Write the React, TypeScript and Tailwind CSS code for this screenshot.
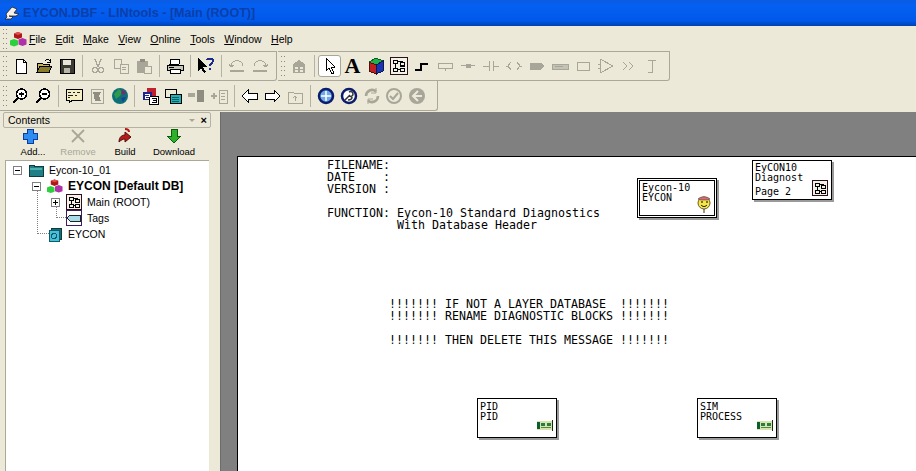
import type { ReactNode } from "react";

const G = ({ children }: { children: ReactNode }) => (
  <svg width="18" height="18" viewBox="0 0 18 18" fill="none" shapeRendering="crispEdges">
    {children}
  </svg>
);

const grey = "#a8a698";

const NewDoc = () => (
  <G>
    <path d="M4 2h7l3 3v11H4z" fill="#fff" stroke="#000" />
    <path d="M11 2v3h3" stroke="#000" />
  </G>
);
const OpenFile = () => (
  <G>
    <path d="M2 6h5l1 1h6v8H2z" fill="#c9b45c" stroke="#000" />
    <path d="M2 15l3-6h12l-3 6z" fill="#8a7a2c" stroke="#000" />
    <path d="M10 4c2-2 4-2 5 0M15 2v3h-3" stroke="#000" />
  </G>
);
const Save = () => (
  <G>
    <path d="M2 2h14v14H2z" fill="#3c3c34" stroke="#000" />
    <path d="M5 3h8v5H5z" fill="#e8e6d8" />
    <path d="M6 11h6v5H6z" fill="#b8b6a8" />
  </G>
);
const Cut = () => (
  <G>
    <path d="M6 2l3 8M12 2l-3 8" stroke={grey} strokeWidth="1.5" />
    <circle cx="6" cy="13" r="2.5" stroke={grey} strokeWidth="1.5" />
    <circle cx="12" cy="13" r="2.5" stroke={grey} strokeWidth="1.5" />
  </G>
);
const Copy = () => (
  <G>
    <path d="M2 2h7v9H2z" stroke={grey} />
    <path d="M8 7h8v9H8z" fill="#ece9d8" stroke={grey} />
    <path d="M10 10h4M10 12h4" stroke={grey} />
  </G>
);
const Paste = () => (
  <G>
    <path d="M2 4h11v12H2z" fill={grey} />
    <path d="M5 2h5v3H5z" fill="#8f8d80" />
    <path d="M9 9h7v7H9z" fill="#ece9d8" stroke={grey} />
  </G>
);
const Printer = () => (
  <G>
    <path d="M5 2h9l-1 5H4z" fill="#fff" stroke="#000" />
    <path d="M1 8h16v5H1z" fill="#c8c6b8" stroke="#000" />
    <path d="M4 12h10v4H4z" fill="#fff" stroke="#000" />
    <path d="M3 10h5" stroke="#000" />
  </G>
);
const HelpArrow = () => (
  <G>
    <path d="M1 1v13l3-3 3 5 2-1-3-5h4z" fill="#000" />
    <path d="M10 3c1-2 6-2 6 1 0 2-3 2-3 5M13 11v2" stroke="#1c2a8c" strokeWidth="2" />
  </G>
);
const Undo = () => (
  <G>
    <path d="M3 9c1-7 11-7 12 0" stroke={grey} />
    <path d="M1 7l2 3 3-2" stroke={grey} />
    <path d="M2 14h14" stroke={grey} strokeWidth="1.5" />
  </G>
);
const Redo = () => (
  <G>
    <path d="M3 9c1-7 11-7 12 0" stroke={grey} />
    <path d="M12 8l3 2 2-3" stroke={grey} />
    <path d="M2 14h14" stroke={grey} strokeWidth="1.5" />
  </G>
);
const Compile = () => (
  <G>
    <path d="M3 7l6-4 6 4v9H3z" fill={grey} />
    <path d="M5 10h3v2H5zM10 10h3v2h-3zM5 13h3v2H5zM10 13h3v2h-3z" fill="#ece9d8" />
  </G>
);
const Pointer = () => (
  <G>
    <path d="M5 1v13l3-3 3 6 2-1-3-6h4z" fill="#fff" stroke="#000" strokeLinejoin="round" />
  </G>
);
const Cube = () => (
  <G>
    <path d="M9 1l7 3-7 4-7-3z" fill="#21b14b" stroke="#0c5c24" />
    <path d="M2 5l7 3v9l-7-3z" fill="#c02020" stroke="#501010" />
    <path d="M16 4v10l-7 3V8z" fill="#1c34b4" stroke="#101850" />
  </G>
);
const Block = ({ small }: { small?: boolean }) => (
  <svg width={small ? 16 : 18} height={small ? 16 : 18} viewBox="0 0 16 16" fill="none" shapeRendering="crispEdges">
    <path d="M.5.5h15v15H.5z" fill="#f4f2e4" stroke="#2c1020" />
    <path d="M3 3h4v3H3zM9 5h4v3H9zM3 10h4v3H3zM9 10h4v3H9z" stroke="#000" />
    <path d="M5 6v4M7 4h4v1M7 11h2" stroke="#000" />
  </svg>
);
const Step = () => (
  <G>
    <path d="M2 13h6V7h7" stroke="#000" strokeWidth="2" />
  </G>
);
const Gray = ({ d, fill }: { d: string; fill?: string }) => (
  <G>
    <path d={d} stroke={grey} fill={fill ?? "none"} />
  </G>
);
const ZoomGlass = ({ plus }: { plus?: boolean }) => (
  <G>
    <circle cx="10.5" cy="7" r="5" fill="#fff" stroke="#000" strokeWidth="1.5" />
    <path d="M7 11l-5 5" stroke="#000" strokeWidth="2.5" />
    <path d="M8 7h5" stroke="#000" strokeWidth="1.5" />
    {plus && <path d="M10.5 4.5v5" stroke="#000" strokeWidth="1.5" />}
  </G>
);
const Comment = () => (
  <G>
    <path d="M1 2h16v11H8l-4 3v-3H1z" fill="#f6efc4" stroke="#000" />
    <path d="M3 5h3M8 5h2M12 5h3M3 8h5M10 8h2M3 10h2" stroke="#222" />
  </G>
);
const GreyFlag = () => (
  <G>
    <path d="M3 2h12v14H3z" stroke={grey} />
    <path d="M5 5h8l-2 4 2 5H7z" fill="#8f8d80" />
  </G>
);
const Globe = () => (
  <svg width="18" height="18" viewBox="0 0 18 18">
    <circle cx="9" cy="9" r="8" fill="#0f6f78" />
    <path d="M3 7l5-5 3 3-2 4-4 3z" fill="#2f9a4c" />
    <path d="M11 3l4 2-2 3-3-2z" fill="#7a2a70" />
    <path d="M10 11l5-1-3 5z" fill="#1c3c9c" />
  </svg>
);
const Numbers = () => (
  <G>
    <path d="M6 1h9v8H6z" fill="#c02030" />
    <path d="M2 5h9v8H2z" fill="#1c2490" />
    <path d="M8 9h9v8H8z" fill="#fff" stroke="#000" />
    <path d="M11 11h4v2h-3M15 13v2h-4" stroke="#000" />
    <path d="M4 7h4v2H4v2h4" stroke="#fff" />
  </G>
);
const Windows = () => (
  <G>
    <path d="M1 2h11v8H1z" fill="#ece9d8" stroke="#000" />
    <path d="M6 7h11v9H6z" fill="#22b0b8" stroke="#000" />
    <path d="M8 10h7M8 12h7M8 14h7" stroke="#0c5c60" />
  </G>
);
const GreyMerge = () => (
  <G>
    <path d="M1 6h7v4H1z" fill={grey} />
    <path d="M10 3h7v12h-7z" fill="#8f8d80" />
  </G>
);
const GreyPlus = () => (
  <G>
    <path d="M1 9h6M4 6v6" stroke={grey} strokeWidth="1.5" />
    <path d="M9 3h8v13H9z" stroke={grey} />
    <path d="M11 6h4M11 9h4M11 12h4" stroke={grey} />
  </G>
);
const ArrowL = () => (
  <G>
    <path d="M1 9l6-6v3h9v6H7v3z" fill="#fff" stroke="#000" />
  </G>
);
const ArrowR = () => (
  <G>
    <path d="M17 9l-6-6v3H2v6h9v3z" fill="#fff" stroke="#000" />
  </G>
);
const UpFolder = () => (
  <G>
    <path d="M2 5h5l1 1h8v10H2z" stroke={grey} />
    <path d="M9 14V9M7 11l2-2 2 2" stroke={grey} />
  </G>
);
const RoundPlus = () => (
  <svg width="18" height="18" viewBox="0 0 18 18">
    <circle cx="9" cy="9" r="7" fill="#6fa8e8" stroke="#0c1c6c" strokeWidth="2.5" />
    <path d="M9 4v10M4 9h10" stroke="#fff" strokeWidth="1.5" />
  </svg>
);
const RoundKey = () => (
  <svg width="18" height="18" viewBox="0 0 18 18" fill="none">
    <circle cx="9" cy="9" r="7" fill="#fff" stroke="#0c1c6c" strokeWidth="2.5" />
    <path d="M5 13l5-5M9 5c2-1 4 0 4 2s-2 3-4 2M8 13c2 0 4-1 4-3" stroke="#333" strokeWidth="1.5" />
  </svg>
);
const RoundSync = () => (
  <svg width="18" height="18" viewBox="0 0 18 18" fill="none">
    <path d="M3 9a6 6 0 0 1 10-4.5M15 9a6 6 0 0 1-10 4.5" stroke={grey} strokeWidth="2.5" />
    <path d="M13 1v5h-5M5 17v-5h5" stroke={grey} />
  </svg>
);
const RoundCheck = () => (
  <svg width="18" height="18" viewBox="0 0 18 18" fill="none">
    <circle cx="9" cy="9" r="7" stroke={grey} strokeWidth="2" />
    <path d="M5 9l3 3 5-6" stroke={grey} strokeWidth="2" />
  </svg>
);
const RoundBack = () => (
  <svg width="18" height="18" viewBox="0 0 18 18" fill="none">
    <circle cx="9" cy="9" r="8" fill={grey} />
    <path d="M10 4L5 9l5 5M5 9h9" stroke="#ece9d8" strokeWidth="2" />
  </svg>
);

const Grip = () => (
  <div className="w-[4px] h-[20px] ml-[3px] mr-[2px] shrink-0 grid grid-cols-2 gap-[1px] content-between">
    {Array.from({ length: 10 }).map((_, i) => (
      <span key={i} className="w-[1px] h-[1px] bg-[#8a887a]" />
    ))}
  </div>
);

const Sep = () => <div className="w-[1px] h-[22px] mx-[3.5px] bg-[#b4b2a2] shrink-0" />;

const Tool = ({ children, active }: { children: ReactNode; active?: boolean }) => (
  <div
    className={`w-[23px] h-[22px] shrink-0 flex items-center justify-center ${
      active ? "bg-white border border-[#a8a698] rounded-[3px]" : ""
    }`}
  >
    {children}
  </div>
);

// second row's buttons sit a little tighter than the first row's
const Tool2 = ({ children }: { children: ReactNode }) => (
  <div className="w-[22.8px] h-[22px] shrink-0 flex items-center justify-center">{children}</div>
);

const Band = ({ children, className }: { children: ReactNode; className: string }) => (
  <div className={`${className} h-full flex items-center border-r border-b border-[#aca899] rounded-br-[3px] shrink-0`}>
    <Grip />
    {children}
  </div>
);

const menus = [
  ["F", "ile"],
  ["E", "dit"],
  ["M", "ake"],
  ["V", "iew"],
  ["O", "nline"],
  ["T", "ools"],
  ["W", "indow"],
  ["H", "elp"],
];

const MiniApp = () => (
  <svg width="17" height="16" viewBox="0 0 17 16">
    <path d="M8 1l4 1.500v4L8 8 4 6.500v-4z" fill="#b01818" />
    <path d="M4 8l4 1.500v4.500L4 15.500 0 14V9.500z" fill="#2cd03c" />
    <path d="M12.500 7l4 1.500v5l-4 1.500-4-1.500v-5z" fill="#b030a8" />
    <path d="M8 1l4 1.500L8 4 4 2.500z" fill="#e05050" />
  </svg>
);

const Folder = () => (
  <svg width="16" height="14" viewBox="0 0 16 14" shapeRendering="crispEdges">
    <path d="M1 2h5v1h9v10H1z" fill="#1f7f86" stroke="#0c3c40" />
    <path d="M2 5h12v2H2z" fill="#4fb0b4" />
  </svg>
);

const TagIcon = () => (
  <svg width="16" height="16" viewBox="0 0 16 16" shapeRendering="crispEdges">
    <path d="M.5.5h15v15H.5z" fill="#fff" stroke="#3c1c60" />
    <path d="M1 8l3-3h10v6H4z" fill="#a8dce8" stroke="#222" />
  </svg>
);

const DbIcon = () => (
  <svg width="14" height="15" viewBox="0 0 14 15" shapeRendering="crispEdges">
    <path d="M3 1h10v11H3z" fill="#1c6c74" stroke="#0c3c40" />
    <path d="M1 3h10v11H1z" fill="#4ac0d8" stroke="#0c5c70" />
    <circle cx="6" cy="9" r="2.5" fill="none" stroke="#0c5c70" />
  </svg>
);

const Expander = ({ open }: { open?: boolean }) => (
  <div className="w-[9px] h-[9px] border border-[#808080] bg-white flex items-center justify-center relative shrink-0">
    <span className="w-[5px] h-[1px] bg-black absolute" />
    {!open && <span className="w-[1px] h-[5px] bg-black absolute" />}
  </div>
);

const TreeRow = ({
  indent,
  exp,
  icon,
  children,
  bold,
}: {
  indent: string;
  exp?: ReactNode;
  icon: ReactNode;
  children: ReactNode;
  bold?: boolean;
}) => (
  <div className={`h-[16px] flex items-center relative ${indent}`}>
    <div className="w-[9px] mr-[6px] shrink-0 flex justify-center">{exp}</div>
    <div className="w-[16px] flex justify-center shrink-0">{icon}</div>
    <span className={`ml-[5px] whitespace-nowrap ${bold ? "font-bold text-[12px]" : "text-[10.5px] pt-[1px]"}`}>{children}</span>
  </div>
);

const ChipIcon = () => (
  <svg className="absolute right-[3px] bottom-[6px]" width="16" height="11" viewBox="0 0 16 11" shapeRendering="crispEdges">
    <path d="M0 1h16v9H0z" fill="#d8e4b0" />
    <path d="M0 2h3v7H0z" fill="#0c6030" />
    <path d="M4 3h4v3H4zM10 3h4v3h-4z" fill="#2c7c40" />
    <path d="M4 7h10v1H4z" fill="#4c8c50" />
    <path d="M15 0h1v11h-1z" fill="#1c2c10" />
  </svg>
);

const Smiley = () => (
  <svg className="absolute right-[3px] bottom-[2px]" width="14" height="18" viewBox="0 0 14 18">
    <circle cx="7" cy="8" r="6" fill="#f4e64c" stroke="#6c6020" />
    <path d="M1 4c3-3 9-3 12 0l-2 1H3z" fill="#d86c70" stroke="#333" strokeWidth=".5" />
    <path d="M4 7h2M9 7h2" stroke="#000" />
    <path d="M4 10c2 2 4 2 6 0" stroke="#000" fill="none" />
    <path d="M7 14v4" stroke="#333" />
  </svg>
);

const Node = ({
  className,
  children,
  dbl,
}: {
  className: string;
  children: ReactNode;
  dbl?: boolean;
}) => (
  <div
    className={`absolute w-[80px] h-[40px] bg-white border border-black shadow-[2px_2px_0_#9a9a9a] ${className}`}
  >
    {dbl ? (
      <div className="absolute inset-[1px] border border-black pl-[2px] pt-[2px]">{children}</div>
    ) : (
      <div className="pl-[2px] pt-[2px] h-full">{children}</div>
    )}
  </div>
);

const sheetText = `FILENAME:
DATE    :
VERSION :

FUNCTION: Eycon-10 Standard Diagnostics
          With Database Header`;

const warnText = `!!!!!!! IF NOT A LAYER DATABASE  !!!!!!!
!!!!!!! RENAME DIAGNOSTIC BLOCKS !!!!!!!

!!!!!!! THEN DELETE THIS MESSAGE !!!!!!!`;

export default function App() {
  return (
    <div className="w-[916px] h-[471px] overflow-hidden flex flex-col bg-[#ece9d8] text-black font-['Liberation_Sans',sans-serif]">
      {/* title bar */}
      <div className="h-[26px] shrink-0 flex items-center pl-[3px] bg-[linear-gradient(#0a5be0,#0560f2_20%,#0058ea_80%,#0042b0)]">
        <svg width="17" height="17" viewBox="0 0 17 17" className="shrink-0">
          <path d="M3 9l6-7 5 2-3 4 5 1-3 2H6l4 1-2 2H2l2-2z" fill="#f4f2e8" stroke="#222" strokeWidth=".8" />
        </svg>
        <span className="ml-[3px] text-[12.6px] font-bold text-[#0c3fa8] whitespace-nowrap">
          EYCON.DBF - LINtools - [Main (ROOT)]
        </span>
      </div>

      {/* menu bar */}
      <div className="h-[25px] shrink-0 flex items-center text-[10.5px]">
        <Grip />
        <div className="ml-[1px]">
          <MiniApp />
        </div>
        <div className="flex gap-[9.500px] ml-[2px] pt-[2px]">
          {menus.map(([k, rest]) => (
            <span key={k}>
              <span className="underline">{k}</span>
              {rest}
            </span>
          ))}
        </div>
      </div>

      {/* toolbars */}
      <div className="h-[30px] shrink-0 flex gap-[1px]">
        <Band className="w-[277px] border-t">
          <Tool><NewDoc /></Tool>
          <Tool><OpenFile /></Tool>
          <Tool><Save /></Tool>
          <Sep />
          <Tool><Cut /></Tool>
          <Tool><Copy /></Tool>
          <Tool><Paste /></Tool>
          <Sep />
          <Tool><Printer /></Tool>
          <Sep />
          <Tool><HelpArrow /></Tool>
          <Sep />
          <Tool><Undo /></Tool>
          <Tool><Redo /></Tool>
        </Band>
        <Band className="w-[392px] border-t">
          <Tool><Compile /></Tool>
          <Sep />
          <Tool active><Pointer /></Tool>
          <Tool><span className="text-[22px] leading-none font-bold font-['Liberation_Serif',serif]">A</span></Tool>
          <Tool><Cube /></Tool>
          <Tool><Block /></Tool>
          <Tool><Step /></Tool>
          <Tool><Gray d="M2 6h14v5H2zM9 11v3" /></Tool>
          <Tool><Gray d="M2 8.5h14M7 7h4v3H7z" fill={grey} /></Tool>
          <Tool><Gray d="M1 9h6M11 9h6M7 4v10M11 4v10" /></Tool>
          <Tool><Gray d="M1 9h2l3-4M3 9l3 4M17 9h-2l-3-4M15 9l-3 4" /></Tool>
          <Tool><Gray d="M2 6h11l3 3-3 3H2z" fill={grey} /></Tool>
          <Tool><Gray d="M1 7h16v5H1zM4 9h8" fill="#c4c2b4" /></Tool>
          <Tool><Gray d="M3 5h12v8H3z" /></Tool>
          <Tool><Gray d="M3 2v14l13-7zM1 7h2M1 11h2" /></Tool>
          <Tool><Gray d="M3 5l4 4-4 4M9 5l4 4-4 4" /></Tool>
          <Tool><Gray d="M5 3h8M9 3v12M5 15h5" /></Tool>
        </Band>
      </div>
      <div className="h-[30px] shrink-0">
        <Band className="w-[438px]">
          <Tool2><ZoomGlass plus /></Tool2>
          <Tool2><ZoomGlass /></Tool2>
          <Sep />
          <Tool2><Comment /></Tool2>
          <Tool2><GreyFlag /></Tool2>
          <Tool2><Globe /></Tool2>
          <Sep />
          <Tool2><Numbers /></Tool2>
          <Tool2><Windows /></Tool2>
          <Tool2><GreyMerge /></Tool2>
          <Tool2><GreyPlus /></Tool2>
          <Sep />
          <Tool2><ArrowL /></Tool2>
          <Tool2><ArrowR /></Tool2>
          <Tool2><UpFolder /></Tool2>
          <Sep />
          <Tool2><RoundPlus /></Tool2>
          <Tool2><RoundKey /></Tool2>
          <Tool2><RoundSync /></Tool2>
          <Tool2><RoundCheck /></Tool2>
          <Tool2><RoundBack /></Tool2>
        </Band>
      </div>

      <div className="flex-1 flex min-h-0">
        {/* contents panel */}
        <div className="w-[210px] shrink-0 flex flex-col pl-[3px] pt-[1px]">
          <div className="h-[16px] w-[208px] border border-[#b4b2a2] rounded-[2px] flex items-center justify-between pl-[4px] pr-[3px] text-[10.5px]">
            <span className="pt-[1px]">Contents</span>
            <div className="flex items-center gap-[6px]">
              <span className="w-0 h-0 border-x-[3px] border-x-transparent border-t-[3px] border-t-[#a8a698]" />
              <span className="text-[11px] font-bold leading-none">×</span>
            </div>
          </div>
          <div className="h-[32px] flex text-[9.5px] leading-[15px] pl-[12px]">
            <div className="w-[36px] flex flex-col items-center">
              <svg className="mr-[6px]" width="16" height="16" viewBox="0 0 16 16" shapeRendering="crispEdges">
                <path d="M5 1h6v4h4v6h-4v4H5v-4H1V5h4z" fill="#2f8cf0" stroke="#0c3ca0" />
              </svg>
              <span>Add...</span>
            </div>
            <div className="w-[48px] ml-[3px] flex flex-col items-center text-[#a8a698]">
              <svg width="16" height="16" viewBox="0 0 16 16">
                <path d="M2 2l12 12M14 2L2 14" stroke={grey} strokeWidth="1.8" />
              </svg>
              <span>Remove</span>
            </div>
            <div className="w-[40px] ml-[3px] flex flex-col items-center">
              <svg width="16" height="16" viewBox="0 0 16 16">
                <path d="M2 14c0-6 4-7 6-7V4l6 5-6 5v-3c-2 0-4 1-6 3z" fill="#b81818" stroke="#501010" />
                <path d="M8 1c2 0 4 1 4 3" stroke="#b81818" strokeWidth="2" fill="none" />
              </svg>
              <span>Build</span>
            </div>
            <div className="w-[54px] ml-[2px] flex flex-col items-center">
              <svg width="16" height="16" viewBox="0 0 16 16" shapeRendering="crispEdges">
                <path d="M5 1h6v7h4l-7 7-7-7h4z" fill="#2cb02c" stroke="#0c5c0c" />
              </svg>
              <span>Download</span>
            </div>
          </div>
          <div className="relative flex-1 w-[204px] ml-[2px] bg-white border-t border-l border-[#aca899] pt-[1px] pl-[7px]">
            {/* dotted tree connectors */}
            <div className="absolute left-[31px] top-[24px] h-[49px] border-l border-dotted border-[#808080]" />
            <div className="absolute left-[31px] top-[72px] w-[12px] border-t border-dotted border-[#808080]" />
            <div className="absolute left-[50px] top-[41px] h-[16px] border-l border-dotted border-[#808080]" />
            <div className="absolute left-[50px] top-[56px] w-[10px] border-t border-dotted border-[#808080]" />
            <TreeRow indent="ml-0" exp={<Expander open />} icon={<Folder />}>Eycon-10_01</TreeRow>
            <TreeRow indent="ml-[19px]" exp={<Expander open />} icon={<MiniApp />} bold>EYCON [Default DB]</TreeRow>
            <TreeRow indent="ml-[38px]" exp={<Expander />} icon={<Block small />}>Main (ROOT)</TreeRow>
            <TreeRow indent="ml-[38px]" icon={<TagIcon />}>Tags</TreeRow>
            <TreeRow indent="ml-[19px]" icon={<DbIcon />}>EYCON</TreeRow>
          </div>
        </div>

        {/* diagram canvas */}
        <div className="ml-[10px] flex-1 min-w-0 mt-[1px] bg-[#808080] border-l border-[#6c6c6c] pl-[16px] pt-[44px]">
          <div className="relative h-full bg-white border-l border-t border-black font-['DejaVu_Sans_Mono',monospace] text-[10px] leading-[10px]">
            <pre className="absolute left-[89px] top-[2px] font-['DejaVu_Sans_Mono',monospace] text-[11.63px] leading-[12px]">{sheetText}</pre>
            <pre className="absolute left-[151px] top-[141px] font-['DejaVu_Sans_Mono',monospace] text-[11.63px] leading-[12px]">{warnText}</pre>

            <Node className="left-[399px] top-[21px]" dbl>
              Eycon-10
              <br />
              EYCON
              <Smiley />
            </Node>
            <Node className="left-[514px] top-[3px]">
              EyCON10
              <br />
              Diagnost
              <div className="mt-[4px]">Page 2</div>
              <div className="absolute right-[3px] bottom-[3px]">
                <Block small />
              </div>
            </Node>
            <Node className="left-[239px] top-[241px]">
              <div className="pt-[1px]">
                PID
                <br />
                PID
              </div>
              <ChipIcon />
            </Node>
            <Node className="left-[459px] top-[241px]">
              <div className="pt-[1px]">
                SIM
                <br />
                PROCESS
              </div>
              <ChipIcon />
            </Node>
          </div>
        </div>
      </div>
    </div>
  );
}
